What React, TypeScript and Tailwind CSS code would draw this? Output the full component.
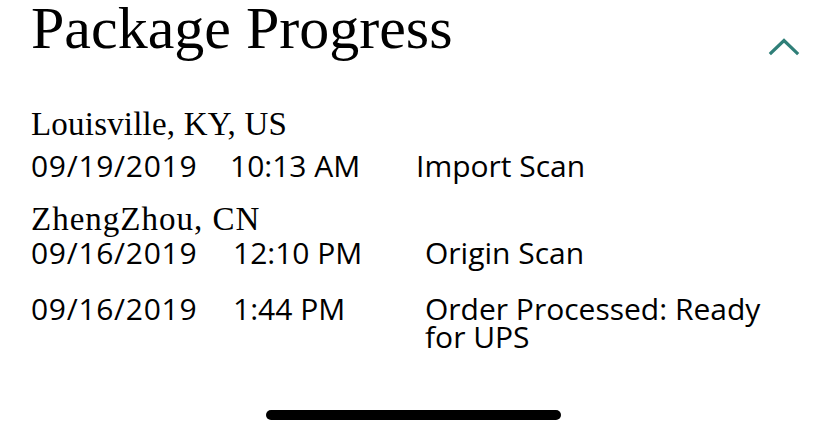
const serif = "font-['Liberation_Serif','Times_New_Roman',serif]";
const sans = "font-['Open_Sans','Noto_Sans',sans-serif]";

type Scan = { date: string; time: string; desc: string };

const louisville: Scan[] = [{ date: "09/19/2019", time: "10:13 AM", desc: "Import Scan" }];
const zhengzhou: Scan[] = [
  { date: "09/16/2019", time: "12:10 PM", desc: "Origin Scan" },
  { date: "09/16/2019", time: "1:44 PM", desc: "Order Processed: Ready for UPS" },
];

function ChevronUp() {
  return (
    <svg width="32" height="20" viewBox="0 0 32 20" fill="none" className="text-[#2f7f78]">
      <path d="M3 15 L16 2.5 L29 15" stroke="currentColor" strokeWidth="3.2" strokeLinecap="square" />
    </svg>
  );
}

function ScanRow({ scan, cols }: { scan: Scan; cols: string }) {
  return (
    <div className={`${sans} grid ${cols} text-[30px] leading-[28px]`}>
      <span className="tracking-[0.7px]">{scan.date}</span>
      <span>{scan.time}</span>
      <span>{scan.desc}</span>
    </div>
  );
}

export default function App() {
  return (
    <div className="relative h-[436px] w-[828px] overflow-hidden bg-white text-black">
      <div className="-mt-[5px] flex items-start justify-between pl-[31px] pr-[28px]">
        <h1 className={`${serif} text-[60px] leading-[66px]`}>Package Progress</h1>
        <div className="mt-[43px]">
          <ChevronUp />
        </div>
      </div>

      <div className="mt-[45px] pl-[31px]">
        <h2 className={`${serif} text-[33px] leading-[36px] tracking-[0.2px]`}>Louisville, KY, US</h2>
        <div className="mt-[10px]">
          {louisville.map((s) => (
            <ScanRow key={s.time} scan={s} cols="grid-cols-[199px_186px_360px]" />
          ))}
        </div>

        <h2 className={`${serif} mt-[21px] text-[33px] leading-[36px] tracking-[1px]`}>ZhengZhou, CN</h2>
        <div className="mt-[2px] flex flex-col gap-[28px]">
          {zhengzhou.map((s) => (
            <ScanRow key={s.time} scan={s} cols="grid-cols-[202px_192px_360px]" />
          ))}
        </div>
      </div>

      <div className="absolute bottom-[16px] left-[266px] h-[10px] w-[295px] rounded-full bg-black" />
    </div>
  );
}
